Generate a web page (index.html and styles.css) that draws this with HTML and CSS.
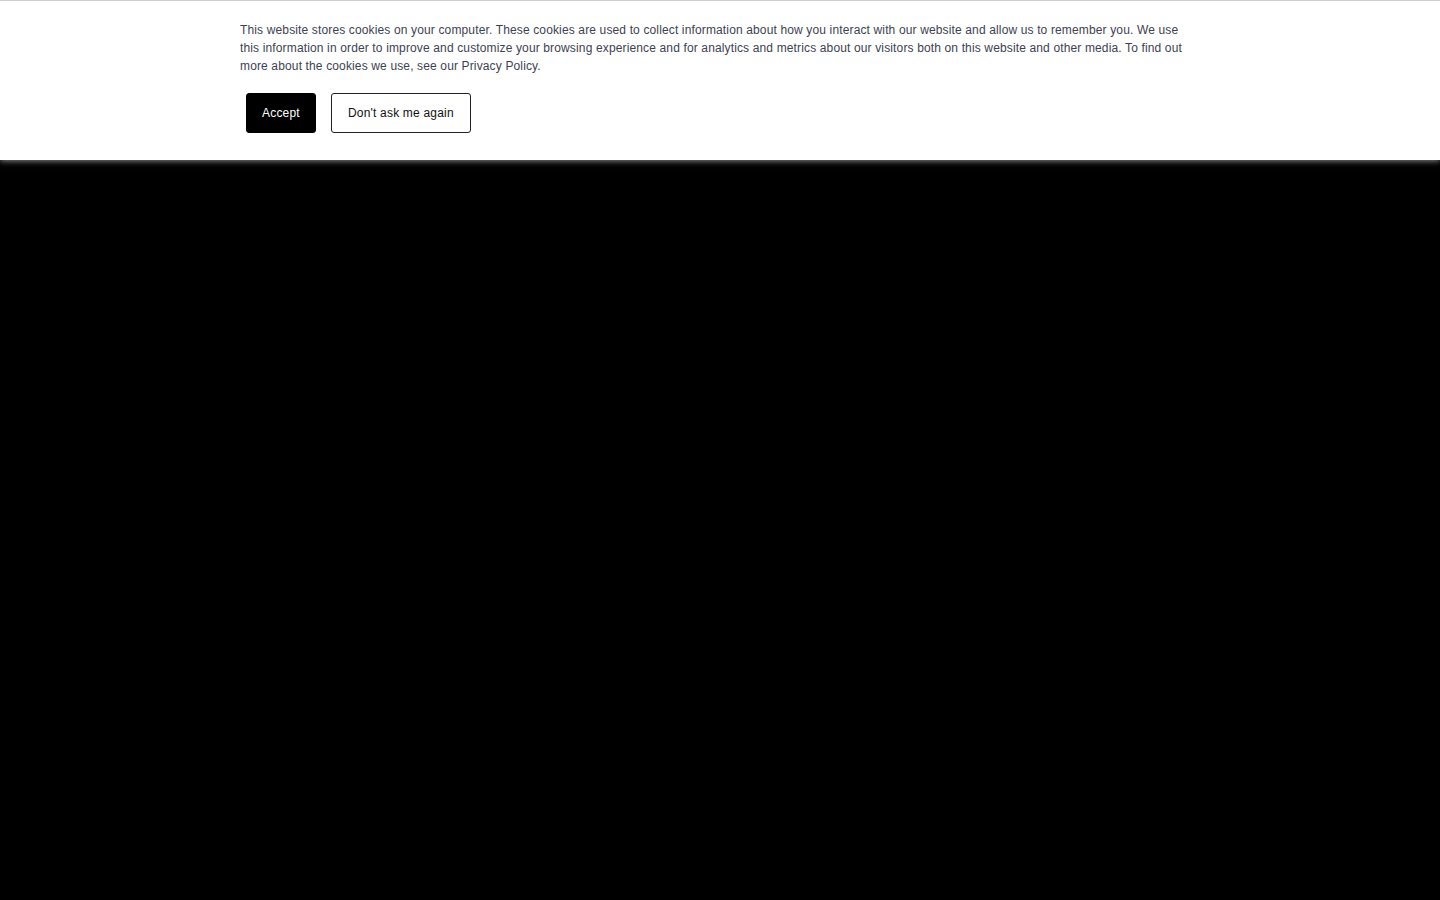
FILE: index.html
```html
<!DOCTYPE html>
<html lang="en">
<head>
    <meta charset="UTF-8">
    <meta name="viewport" content="width=device-width, initial-scale=1.0">
    <title>Cookie notice</title>
    <link rel="stylesheet" href="styles.css">
</head>
<body>
    <div class="cookie-banner">
        <div class="cookie-inner">
            <p class="cookie-text">This website stores cookies on your computer. These cookies are used to collect information about how you interact with our website and allow us to remember you. We use this information in order to improve and customize your browsing experience and for analytics and metrics about our visitors both on this website and other media. To find out more about the cookies we use, see our Privacy Policy.</p>
            <div class="cookie-buttons">
                <button class="btn btn-accept">Accept</button>
                <button class="btn btn-decline">Don't ask me again</button>
            </div>
        </div>
    </div>
    <main class="page"></main>
</body>
</html>
```

FILE: styles.css
```css
* {
    margin: 0;
    padding: 0;
    box-sizing: border-box;
}

html, body {
    height: 100%;
}

body {
    font-family: 'Liberation Sans', Arial, sans-serif;
    background: #000;
    overflow: hidden;
}

.cookie-banner {
    background: #fff;
    border-top: 1px solid #cfcfcf;
    box-shadow: 0 1px 6px rgba(200, 200, 200, 0.7);
    position: relative;
    z-index: 2;
}

.cookie-inner {
    width: 960px;
    margin: 0 auto;
    padding: 20px 0 27px 0;
}

.cookie-text {
    font-size: 12px;
    line-height: 18px;
    letter-spacing: 0.14px;
    color: #3d4252;
}

.cookie-buttons {
    display: flex;
    gap: 15px;
    margin-top: 18px;
    padding-left: 6px;
}

.btn {
    font-family: 'Liberation Sans', Arial, sans-serif;
    font-size: 12px;
    letter-spacing: 0.2px;
    height: 40px;
    padding: 0 16px;
    border-radius: 3px;
    cursor: pointer;
}

.btn-accept {
    background: #000;
    color: #fff;
    border: 1px solid #000;
    padding: 0 15px;
}

.btn-decline {
    background: #fff;
    color: #111;
    border: 1px solid #222;
}
```
